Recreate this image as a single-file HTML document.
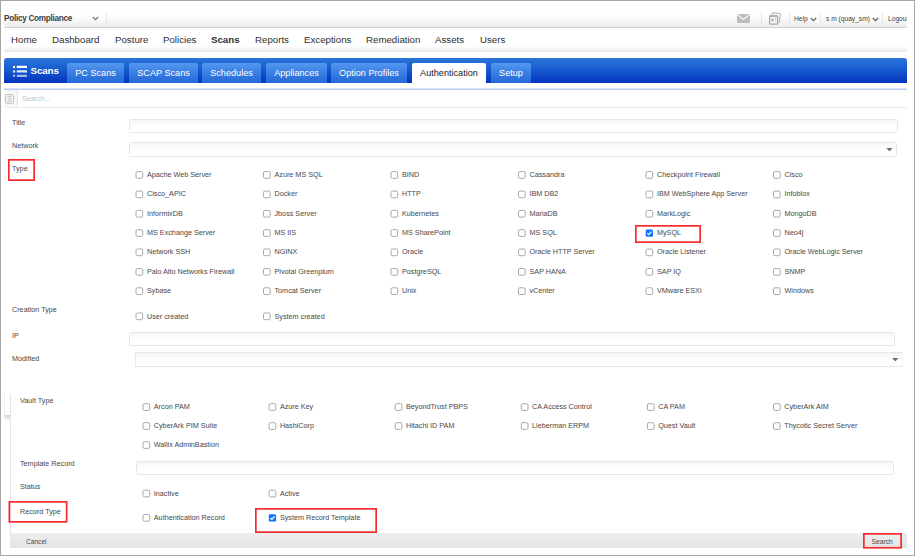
<!DOCTYPE html>
<html lang="en">
<head>
<meta charset="utf-8">
<title>Policy Compliance - Scans - Authentication</title>
<style>
*{box-sizing:border-box;margin:0;padding:0}
html,body{width:915px;height:556px;overflow:hidden;background:#fff}
body{font-family:"Liberation Sans",sans-serif;color:#333;position:relative}
.a{position:absolute;white-space:nowrap}
.frame{left:0;top:0;width:915px;height:556px;border:1px solid #a6a6a6}
.topbar{left:4px;top:8px;width:903px;height:20px;background:linear-gradient(#fff 0%,#fdfdfd 45%,#ededed 100%);border-bottom:1px solid #cfd3d6}
.nav{left:4px;top:28px;width:903px;height:24px;background:linear-gradient(#fff 0%,#fff 76%,#e9e9e9 100%)}
.bluebar{left:4px;top:58px;width:903px;height:25px;border-radius:3px 3px 0 0;background:linear-gradient(#2a74d8 0%,#1a5fd0 40%,#0433c0 100%)}
.tab{top:63px;height:20px;border-radius:2px 2px 0 0;background:linear-gradient(#5598f0 0%,#3a80e4 45%,#2468d8 100%);color:#fff;font-size:9.15px;line-height:20px;text-align:center}
.tab.on{background:#fff;color:#222}
.lbl{font-size:7.22px;line-height:10px;color:#484848}
.inp{height:14px;border:1px solid #e7e7e7;border-radius:1.5px;background:linear-gradient(#f6f6f6,#fff 60%)}
.navt{top:33px;font-size:9.7px;line-height:14px;color:#2e2e2e}
.tt{font-size:6.65px;line-height:10px;color:#444;top:14px}
</style>
</head>
<body>
<div class="a frame"></div>
<div class="a topbar"></div>
<div class="a nav"></div>
<div class="a" style="left:4px;top:13px;font-size:8.2px;letter-spacing:-0.28px;font-weight:bold;line-height:12px;color:#3d3d3d">Policy Compliance</div>
<svg class="a" style="left:92px;top:16px" width="7" height="5" viewBox="0 0 7 5"><path d="M0.8 1 L3.5 3.7 L6.2 1" fill="none" stroke="#777" stroke-width="1.3"/></svg>
<div class="a" style="left:106px;top:13px;width:1px;height:11px;background:#e6e6e6"></div>
<svg class="a" style="left:736.5px;top:14px" width="13" height="9" viewBox="0 0 13 9"><rect x="0" y="0" width="13" height="9" rx="0.8" fill="#bdbdbd"/><path d="M0.3 0.6 L6.5 5.2 L12.7 0.6" fill="none" stroke="#fff" stroke-width="1.1"/></svg>
<div class="a" style="left:761px;top:13px;width:1px;height:11px;background:#e6e6e6"></div>
<svg class="a" style="left:768px;top:12px" width="14" height="14" viewBox="0 0 14 14"><rect x="3.6" y="1.2" width="8.4" height="8.8" rx="0.8" fill="#f7f7f7" stroke="#b4b4b4" stroke-width="1" transform="rotate(9 7.8 5.6)"/><rect x="1.6" y="3.8" width="8" height="8.4" rx="0.8" fill="#f3f3f3" stroke="#a8a8a8" stroke-width="1.2"/><rect x="1.6" y="3.6" width="8" height="1.2" fill="#ababab"/><circle cx="4.5" cy="8.1" r="1.25" fill="#a4a4a4"/><rect x="7" y="6" width="1.2" height="1.1" fill="#b4b4b4"/><rect x="7" y="8.4" width="1.2" height="1.1" fill="#c4c4c4"/></svg>
<div class="a" style="left:789px;top:13px;width:1px;height:11px;background:#e6e6e6"></div>
<div class="a tt" style="left:794px">Help</div>
<svg class="a" style="left:809.5px;top:17px" width="7" height="5" viewBox="0 0 7 5"><path d="M0.8 1 L3.5 3.7 L6.2 1" fill="none" stroke="#666" stroke-width="1.3"/></svg>
<div class="a" style="left:820px;top:13px;width:1px;height:11px;background:#e6e6e6"></div>
<div class="a tt" style="left:826px">s m (quay_sm)</div>
<svg class="a" style="left:871.5px;top:17px" width="7" height="5" viewBox="0 0 7 5"><path d="M0.8 1 L3.5 3.7 L6.2 1" fill="none" stroke="#666" stroke-width="1.3"/></svg>
<div class="a" style="left:882px;top:13px;width:1px;height:11px;background:#e6e6e6"></div>
<div class="a tt" style="left:888px;width:19px;overflow:hidden">Logout</div>
<div class="a navt" style="left:11px">Home</div>
<div class="a navt" style="left:52px">Dashboard</div>
<div class="a navt" style="left:115px">Posture</div>
<div class="a navt" style="left:163px">Policies</div>
<div class="a navt" style="left:211px;font-weight:bold">Scans</div>
<div class="a navt" style="left:255px">Reports</div>
<div class="a navt" style="left:304px">Exceptions</div>
<div class="a navt" style="left:366px">Remediation</div>
<div class="a navt" style="left:435px">Assets</div>
<div class="a navt" style="left:480px">Users</div>
<div class="a bluebar"></div>
<svg class="a" style="left:12px;top:65px" width="16" height="13" viewBox="0 0 16 13"><g fill="#fff"><circle cx="2.05" cy="1.95" r="1.2"/><rect x="4.8" y="0.85" width="10.2" height="2.2" rx="0.3"/><g opacity="0.86"><circle cx="2.05" cy="6.45" r="1.2"/><rect x="4.8" y="5.35" width="10.2" height="2.2" rx="0.3"/></g><g opacity="0.62"><circle cx="2.05" cy="10.8" r="1.2"/><rect x="4.8" y="9.7" width="10.2" height="2.2" rx="0.3"/></g></g></svg>
<div class="a" style="left:30.6px;top:64px;font-size:9.8px;letter-spacing:-0.15px;font-weight:bold;color:#fff;line-height:14px">Scans</div>
<div class="a tab" style="left:67px;width:57px">PC Scans</div>
<div class="a tab" style="left:129px;width:69px">SCAP Scans</div>
<div class="a tab" style="left:202px;width:59px">Schedules</div>
<div class="a tab" style="left:266px;width:61px">Appliances</div>
<div class="a tab" style="left:331px;width:76px">Option Profiles</div>
<div class="a tab on" style="left:412px;width:74px">Authentication</div>
<div class="a tab" style="left:491px;width:40px">Setup</div>
<div class="a" style="left:4px;top:88px;width:903px;height:20px;border-bottom:1px solid #ececec;background:linear-gradient(#dbe6f9 0,#dbe6f9 1px,#b7cdf3 1px,#b7cdf3 2px,#fff 2px)"></div>
<div class="a" style="left:4px;top:90px;width:14px;height:17px;background:#f7f7f7;border-right:1px solid #e6e6e6"></div>
<svg class="a" style="left:5px;top:94px" width="9" height="10" viewBox="0 0 9 10"><rect x="0.5" y="0.5" width="8" height="9" rx="1.3" fill="#f0f0f0" stroke="#c6c6c6"/><path d="M2.6 2.8h3.8M2.6 5h3.8M2.6 7.2h3.8" stroke="#c4c4c4" stroke-width="1"/></svg>
<div class="a" style="left:22px;top:94px;font-size:7.2px;line-height:10px;color:#c4c4c4">Search...</div>
<div class="a lbl" style="left:12px;top:118px">Title</div>
<div class="a inp" style="left:129px;top:119px;width:769px"></div>
<div class="a lbl" style="left:12px;top:141px">Network</div>
<div class="a inp" style="left:129px;top:142px;width:768px;height:15px"></div>
<svg class="a" style="left:886px;top:147px" width="8" height="6" viewBox="0 0 8 6"><path d="M0.4 0.9 H6.6 L3.5 4.5 Z" fill="#6e6e6e"/></svg>
<div class="a lbl" style="left:12px;top:164px">Type</div>
<svg class="a" style="left:0;top:0;pointer-events:none" width="915" height="556" viewBox="0 0 915 556"><rect x="8.85" y="159.85" width="25.3" height="20.3" fill="none" stroke="#fb2a2e" stroke-width="1.7"/></svg>
<svg class="a" style="left:135px;top:171px" width="10" height="10" viewBox="0 0 10 10"><rect x="1.0" y="0.6" width="6.7" height="6.7" rx="1.4" fill="#fff" stroke="#a8a8a8" stroke-width="1"/></svg>
<div class="a lbl" style="left:147.0px;top:170px">Apache Web Server</div>
<svg class="a" style="left:263px;top:171px" width="10" height="10" viewBox="0 0 10 10"><rect x="0.5" y="0.6" width="6.7" height="6.7" rx="1.4" fill="#fff" stroke="#a8a8a8" stroke-width="1"/></svg>
<div class="a lbl" style="left:274.5px;top:170px">Azure MS SQL</div>
<svg class="a" style="left:390px;top:171px" width="10" height="10" viewBox="0 0 10 10"><rect x="1.0" y="0.6" width="6.7" height="6.7" rx="1.4" fill="#fff" stroke="#a8a8a8" stroke-width="1"/></svg>
<div class="a lbl" style="left:402.0px;top:170px">BIND</div>
<svg class="a" style="left:518px;top:171px" width="10" height="10" viewBox="0 0 10 10"><rect x="0.5" y="0.6" width="6.7" height="6.7" rx="1.4" fill="#fff" stroke="#a8a8a8" stroke-width="1"/></svg>
<div class="a lbl" style="left:529.5px;top:170px">Cassandra</div>
<svg class="a" style="left:645px;top:171px" width="10" height="10" viewBox="0 0 10 10"><rect x="1.0" y="0.6" width="6.7" height="6.7" rx="1.4" fill="#fff" stroke="#a8a8a8" stroke-width="1"/></svg>
<div class="a lbl" style="left:657.0px;top:170px">Checkpoint Firewall</div>
<svg class="a" style="left:773px;top:171px" width="10" height="10" viewBox="0 0 10 10"><rect x="0.5" y="0.6" width="6.7" height="6.7" rx="1.4" fill="#fff" stroke="#a8a8a8" stroke-width="1"/></svg>
<div class="a lbl" style="left:784.5px;top:170px">Cisco</div>
<svg class="a" style="left:135px;top:190px" width="10" height="10" viewBox="0 0 10 10"><rect x="1.0" y="1.1" width="6.7" height="6.7" rx="1.4" fill="#fff" stroke="#a8a8a8" stroke-width="1"/></svg>
<div class="a lbl" style="left:147.0px;top:189px">Cisco_APIC</div>
<svg class="a" style="left:263px;top:190px" width="10" height="10" viewBox="0 0 10 10"><rect x="0.5" y="1.1" width="6.7" height="6.7" rx="1.4" fill="#fff" stroke="#a8a8a8" stroke-width="1"/></svg>
<div class="a lbl" style="left:274.5px;top:189px">Docker</div>
<svg class="a" style="left:390px;top:190px" width="10" height="10" viewBox="0 0 10 10"><rect x="1.0" y="1.1" width="6.7" height="6.7" rx="1.4" fill="#fff" stroke="#a8a8a8" stroke-width="1"/></svg>
<div class="a lbl" style="left:402.0px;top:189px">HTTP</div>
<svg class="a" style="left:518px;top:190px" width="10" height="10" viewBox="0 0 10 10"><rect x="0.5" y="1.1" width="6.7" height="6.7" rx="1.4" fill="#fff" stroke="#a8a8a8" stroke-width="1"/></svg>
<div class="a lbl" style="left:529.5px;top:189px">IBM DB2</div>
<svg class="a" style="left:645px;top:190px" width="10" height="10" viewBox="0 0 10 10"><rect x="1.0" y="1.1" width="6.7" height="6.7" rx="1.4" fill="#fff" stroke="#a8a8a8" stroke-width="1"/></svg>
<div class="a lbl" style="left:657.0px;top:189px">IBM WebSphere App Server</div>
<svg class="a" style="left:773px;top:190px" width="10" height="10" viewBox="0 0 10 10"><rect x="0.5" y="1.1" width="6.7" height="6.7" rx="1.4" fill="#fff" stroke="#a8a8a8" stroke-width="1"/></svg>
<div class="a lbl" style="left:784.5px;top:189px">Infoblox</div>
<svg class="a" style="left:135px;top:209px" width="10" height="10" viewBox="0 0 10 10"><rect x="1.0" y="1.4" width="6.7" height="6.7" rx="1.4" fill="#fff" stroke="#a8a8a8" stroke-width="1"/></svg>
<div class="a lbl" style="left:147.0px;top:209px">InformixDB</div>
<svg class="a" style="left:263px;top:209px" width="10" height="10" viewBox="0 0 10 10"><rect x="0.5" y="1.4" width="6.7" height="6.7" rx="1.4" fill="#fff" stroke="#a8a8a8" stroke-width="1"/></svg>
<div class="a lbl" style="left:274.5px;top:209px">Jboss Server</div>
<svg class="a" style="left:390px;top:209px" width="10" height="10" viewBox="0 0 10 10"><rect x="1.0" y="1.4" width="6.7" height="6.7" rx="1.4" fill="#fff" stroke="#a8a8a8" stroke-width="1"/></svg>
<div class="a lbl" style="left:402.0px;top:209px">Kubernetes</div>
<svg class="a" style="left:518px;top:209px" width="10" height="10" viewBox="0 0 10 10"><rect x="0.5" y="1.4" width="6.7" height="6.7" rx="1.4" fill="#fff" stroke="#a8a8a8" stroke-width="1"/></svg>
<div class="a lbl" style="left:529.5px;top:209px">MariaDB</div>
<svg class="a" style="left:645px;top:209px" width="10" height="10" viewBox="0 0 10 10"><rect x="1.0" y="1.4" width="6.7" height="6.7" rx="1.4" fill="#fff" stroke="#a8a8a8" stroke-width="1"/></svg>
<div class="a lbl" style="left:657.0px;top:209px">MarkLogic</div>
<svg class="a" style="left:773px;top:209px" width="10" height="10" viewBox="0 0 10 10"><rect x="0.5" y="1.4" width="6.7" height="6.7" rx="1.4" fill="#fff" stroke="#a8a8a8" stroke-width="1"/></svg>
<div class="a lbl" style="left:784.5px;top:209px">MongoDB</div>
<svg class="a" style="left:135px;top:229px" width="10" height="10" viewBox="0 0 10 10"><rect x="1.0" y="0.7" width="6.7" height="6.7" rx="1.4" fill="#fff" stroke="#a8a8a8" stroke-width="1"/></svg>
<div class="a lbl" style="left:147.0px;top:228px">MS Exchange Server</div>
<svg class="a" style="left:263px;top:229px" width="10" height="10" viewBox="0 0 10 10"><rect x="0.5" y="0.7" width="6.7" height="6.7" rx="1.4" fill="#fff" stroke="#a8a8a8" stroke-width="1"/></svg>
<div class="a lbl" style="left:274.5px;top:228px">MS IIS</div>
<svg class="a" style="left:390px;top:229px" width="10" height="10" viewBox="0 0 10 10"><rect x="1.0" y="0.7" width="6.7" height="6.7" rx="1.4" fill="#fff" stroke="#a8a8a8" stroke-width="1"/></svg>
<div class="a lbl" style="left:402.0px;top:228px">MS SharePoint</div>
<svg class="a" style="left:518px;top:229px" width="10" height="10" viewBox="0 0 10 10"><rect x="0.5" y="0.7" width="6.7" height="6.7" rx="1.4" fill="#fff" stroke="#a8a8a8" stroke-width="1"/></svg>
<div class="a lbl" style="left:529.5px;top:228px">MS SQL</div>
<svg class="a" style="left:645px;top:229px" width="10" height="10" viewBox="0 0 10 10"><rect x="0.7" y="0.4" width="7.3" height="7.3" rx="1.3" fill="#0f75ff"/><path d="M2.3 4.2 L3.8 5.7 L6.5 2.6" fill="none" stroke="#fff" stroke-width="1.15"/></svg>
<div class="a lbl" style="left:657.0px;top:228px">MySQL</div>
<svg class="a" style="left:773px;top:229px" width="10" height="10" viewBox="0 0 10 10"><rect x="0.5" y="0.7" width="6.7" height="6.7" rx="1.4" fill="#fff" stroke="#a8a8a8" stroke-width="1"/></svg>
<div class="a lbl" style="left:784.5px;top:228px">Neo4j</div>
<svg class="a" style="left:135px;top:248px" width="10" height="10" viewBox="0 0 10 10"><rect x="1.0" y="1.0" width="6.7" height="6.7" rx="1.4" fill="#fff" stroke="#a8a8a8" stroke-width="1"/></svg>
<div class="a lbl" style="left:147.0px;top:247px">Network SSH</div>
<svg class="a" style="left:263px;top:248px" width="10" height="10" viewBox="0 0 10 10"><rect x="0.5" y="1.0" width="6.7" height="6.7" rx="1.4" fill="#fff" stroke="#a8a8a8" stroke-width="1"/></svg>
<div class="a lbl" style="left:274.5px;top:247px">NGINX</div>
<svg class="a" style="left:390px;top:248px" width="10" height="10" viewBox="0 0 10 10"><rect x="1.0" y="1.0" width="6.7" height="6.7" rx="1.4" fill="#fff" stroke="#a8a8a8" stroke-width="1"/></svg>
<div class="a lbl" style="left:402.0px;top:247px">Oracle</div>
<svg class="a" style="left:518px;top:248px" width="10" height="10" viewBox="0 0 10 10"><rect x="0.5" y="1.0" width="6.7" height="6.7" rx="1.4" fill="#fff" stroke="#a8a8a8" stroke-width="1"/></svg>
<div class="a lbl" style="left:529.5px;top:247px">Oracle HTTP Server</div>
<svg class="a" style="left:645px;top:248px" width="10" height="10" viewBox="0 0 10 10"><rect x="1.0" y="1.0" width="6.7" height="6.7" rx="1.4" fill="#fff" stroke="#a8a8a8" stroke-width="1"/></svg>
<div class="a lbl" style="left:657.0px;top:247px">Oracle Listener</div>
<svg class="a" style="left:773px;top:248px" width="10" height="10" viewBox="0 0 10 10"><rect x="0.5" y="1.0" width="6.7" height="6.7" rx="1.4" fill="#fff" stroke="#a8a8a8" stroke-width="1"/></svg>
<div class="a lbl" style="left:784.5px;top:247px">Oracle WebLogic Server</div>
<svg class="a" style="left:135px;top:268px" width="10" height="10" viewBox="0 0 10 10"><rect x="1.0" y="0.5" width="6.7" height="6.7" rx="1.4" fill="#fff" stroke="#a8a8a8" stroke-width="1"/></svg>
<div class="a lbl" style="left:147.0px;top:267px">Palo Alto Networks Firewall</div>
<svg class="a" style="left:263px;top:268px" width="10" height="10" viewBox="0 0 10 10"><rect x="0.5" y="0.5" width="6.7" height="6.7" rx="1.4" fill="#fff" stroke="#a8a8a8" stroke-width="1"/></svg>
<div class="a lbl" style="left:274.5px;top:267px">Pivotal Greenplum</div>
<svg class="a" style="left:390px;top:268px" width="10" height="10" viewBox="0 0 10 10"><rect x="1.0" y="0.5" width="6.7" height="6.7" rx="1.4" fill="#fff" stroke="#a8a8a8" stroke-width="1"/></svg>
<div class="a lbl" style="left:402.0px;top:267px">PostgreSQL</div>
<svg class="a" style="left:518px;top:268px" width="10" height="10" viewBox="0 0 10 10"><rect x="0.5" y="0.5" width="6.7" height="6.7" rx="1.4" fill="#fff" stroke="#a8a8a8" stroke-width="1"/></svg>
<div class="a lbl" style="left:529.5px;top:267px">SAP HANA</div>
<svg class="a" style="left:645px;top:268px" width="10" height="10" viewBox="0 0 10 10"><rect x="1.0" y="0.5" width="6.7" height="6.7" rx="1.4" fill="#fff" stroke="#a8a8a8" stroke-width="1"/></svg>
<div class="a lbl" style="left:657.0px;top:267px">SAP IQ</div>
<svg class="a" style="left:773px;top:268px" width="10" height="10" viewBox="0 0 10 10"><rect x="0.5" y="0.5" width="6.7" height="6.7" rx="1.4" fill="#fff" stroke="#a8a8a8" stroke-width="1"/></svg>
<div class="a lbl" style="left:784.5px;top:267px">SNMP</div>
<svg class="a" style="left:135px;top:287px" width="10" height="10" viewBox="0 0 10 10"><rect x="1.0" y="0.8" width="6.7" height="6.7" rx="1.4" fill="#fff" stroke="#a8a8a8" stroke-width="1"/></svg>
<div class="a lbl" style="left:147.0px;top:286px">Sybase</div>
<svg class="a" style="left:263px;top:287px" width="10" height="10" viewBox="0 0 10 10"><rect x="0.5" y="0.8" width="6.7" height="6.7" rx="1.4" fill="#fff" stroke="#a8a8a8" stroke-width="1"/></svg>
<div class="a lbl" style="left:274.5px;top:286px">Tomcat Server</div>
<svg class="a" style="left:390px;top:287px" width="10" height="10" viewBox="0 0 10 10"><rect x="1.0" y="0.8" width="6.7" height="6.7" rx="1.4" fill="#fff" stroke="#a8a8a8" stroke-width="1"/></svg>
<div class="a lbl" style="left:402.0px;top:286px">Unix</div>
<svg class="a" style="left:518px;top:287px" width="10" height="10" viewBox="0 0 10 10"><rect x="0.5" y="0.8" width="6.7" height="6.7" rx="1.4" fill="#fff" stroke="#a8a8a8" stroke-width="1"/></svg>
<div class="a lbl" style="left:529.5px;top:286px">vCenter</div>
<svg class="a" style="left:645px;top:287px" width="10" height="10" viewBox="0 0 10 10"><rect x="1.0" y="0.8" width="6.7" height="6.7" rx="1.4" fill="#fff" stroke="#a8a8a8" stroke-width="1"/></svg>
<div class="a lbl" style="left:657.0px;top:286px">VMware ESXi</div>
<svg class="a" style="left:773px;top:287px" width="10" height="10" viewBox="0 0 10 10"><rect x="0.5" y="0.8" width="6.7" height="6.7" rx="1.4" fill="#fff" stroke="#a8a8a8" stroke-width="1"/></svg>
<div class="a lbl" style="left:784.5px;top:286px">Windows</div>
<svg class="a" style="left:0;top:0;pointer-events:none" width="915" height="556" viewBox="0 0 915 556"><rect x="635.85" y="225.85" width="64.3" height="16.3" fill="none" stroke="#fb2a2e" stroke-width="1.7"/></svg>
<div class="a lbl" style="left:12px;top:305px">Creation Type</div>
<svg class="a" style="left:135px;top:312px" width="10" height="10" viewBox="0 0 10 10"><rect x="1.0" y="1.0" width="6.7" height="6.7" rx="1.4" fill="#fff" stroke="#a8a8a8" stroke-width="1"/></svg>
<div class="a lbl" style="left:147.0px;top:311.5px">User created</div>
<svg class="a" style="left:263px;top:312px" width="10" height="10" viewBox="0 0 10 10"><rect x="0.5" y="1.0" width="6.7" height="6.7" rx="1.4" fill="#fff" stroke="#a8a8a8" stroke-width="1"/></svg>
<div class="a lbl" style="left:274.5px;top:311.5px">System created</div>
<div class="a lbl" style="left:12px;top:331px">IP</div>
<div class="a inp" style="left:129px;top:332px;width:766px;border-radius:3px"></div>
<div class="a lbl" style="left:12px;top:354px">Modified</div>
<div class="a inp" style="left:135px;top:352px;width:768px;height:15px;border-right-color:#f0f0f0"></div>
<svg class="a" style="left:892px;top:357px" width="8" height="6" viewBox="0 0 8 6"><path d="M0.2 0.9 H6.4 L3.3 4.5 Z" fill="#6e6e6e"/></svg>
<div class="a" style="left:4px;top:394px;width:6px;height:30px;overflow:hidden"><div class="a" style="left:0;top:-4px;width:12px;height:25px;background:#fff;border-left:1px solid #f0f0f0;border-radius:0 0 0 3px;box-shadow:0 3px 4px rgba(0,0,0,0.2)"></div></div>
<div class="a" style="left:10px;top:394px;width:1px;height:139px;background:#e4e4e4"></div>
<div class="a lbl" style="left:20px;top:396px">Vault Type</div>
<svg class="a" style="left:142px;top:403px" width="10" height="10" viewBox="0 0 10 10"><rect x="1.0" y="0.7" width="6.7" height="6.7" rx="1.4" fill="#fff" stroke="#a8a8a8" stroke-width="1"/></svg>
<div class="a lbl" style="left:153.8px;top:402px">Arcon PAM</div>
<svg class="a" style="left:268px;top:403px" width="10" height="10" viewBox="0 0 10 10"><rect x="1.1" y="0.7" width="6.7" height="6.7" rx="1.4" fill="#fff" stroke="#a8a8a8" stroke-width="1"/></svg>
<div class="a lbl" style="left:279.90000000000003px;top:402px">Azure Key</div>
<svg class="a" style="left:394px;top:403px" width="10" height="10" viewBox="0 0 10 10"><rect x="1.2" y="0.7" width="6.7" height="6.7" rx="1.4" fill="#fff" stroke="#a8a8a8" stroke-width="1"/></svg>
<div class="a lbl" style="left:406.0px;top:402px">BeyondTrust PBPS</div>
<svg class="a" style="left:520px;top:403px" width="10" height="10" viewBox="0 0 10 10"><rect x="1.3" y="0.7" width="6.7" height="6.7" rx="1.4" fill="#fff" stroke="#a8a8a8" stroke-width="1"/></svg>
<div class="a lbl" style="left:532.0999999999999px;top:402px">CA Access Control</div>
<svg class="a" style="left:646px;top:403px" width="10" height="10" viewBox="0 0 10 10"><rect x="1.4" y="0.7" width="6.7" height="6.7" rx="1.4" fill="#fff" stroke="#a8a8a8" stroke-width="1"/></svg>
<div class="a lbl" style="left:658.1999999999999px;top:402px">CA PAM</div>
<svg class="a" style="left:773px;top:403px" width="10" height="10" viewBox="0 0 10 10"><rect x="0.5" y="0.7" width="6.7" height="6.7" rx="1.4" fill="#fff" stroke="#a8a8a8" stroke-width="1"/></svg>
<div class="a lbl" style="left:784.3px;top:402px">CyberArk AIM</div>
<svg class="a" style="left:142px;top:422px" width="10" height="10" viewBox="0 0 10 10"><rect x="1.0" y="0.7" width="6.7" height="6.7" rx="1.4" fill="#fff" stroke="#a8a8a8" stroke-width="1"/></svg>
<div class="a lbl" style="left:153.8px;top:421px">CyberArk PIM Suite</div>
<svg class="a" style="left:268px;top:422px" width="10" height="10" viewBox="0 0 10 10"><rect x="1.1" y="0.7" width="6.7" height="6.7" rx="1.4" fill="#fff" stroke="#a8a8a8" stroke-width="1"/></svg>
<div class="a lbl" style="left:279.90000000000003px;top:421px">HashiCorp</div>
<svg class="a" style="left:394px;top:422px" width="10" height="10" viewBox="0 0 10 10"><rect x="1.2" y="0.7" width="6.7" height="6.7" rx="1.4" fill="#fff" stroke="#a8a8a8" stroke-width="1"/></svg>
<div class="a lbl" style="left:406.0px;top:421px">Hitachi ID PAM</div>
<svg class="a" style="left:520px;top:422px" width="10" height="10" viewBox="0 0 10 10"><rect x="1.3" y="0.7" width="6.7" height="6.7" rx="1.4" fill="#fff" stroke="#a8a8a8" stroke-width="1"/></svg>
<div class="a lbl" style="left:532.0999999999999px;top:421px">Lieberman ERPM</div>
<svg class="a" style="left:646px;top:422px" width="10" height="10" viewBox="0 0 10 10"><rect x="1.4" y="0.7" width="6.7" height="6.7" rx="1.4" fill="#fff" stroke="#a8a8a8" stroke-width="1"/></svg>
<div class="a lbl" style="left:658.1999999999999px;top:421px">Quest Vault</div>
<svg class="a" style="left:773px;top:422px" width="10" height="10" viewBox="0 0 10 10"><rect x="0.5" y="0.7" width="6.7" height="6.7" rx="1.4" fill="#fff" stroke="#a8a8a8" stroke-width="1"/></svg>
<div class="a lbl" style="left:784.3px;top:421px">Thycotic Secret Server</div>
<svg class="a" style="left:142px;top:441px" width="10" height="10" viewBox="0 0 10 10"><rect x="1.0" y="0.7" width="6.7" height="6.7" rx="1.4" fill="#fff" stroke="#a8a8a8" stroke-width="1"/></svg>
<div class="a lbl" style="left:153.8px;top:440px">Wallix AdminBastion</div>
<div class="a lbl" style="left:20px;top:459px">Template Record</div>
<div class="a inp" style="left:136px;top:461px;width:758px"></div>
<div class="a lbl" style="left:20px;top:482px">Status</div>
<svg class="a" style="left:142px;top:489px" width="10" height="10" viewBox="0 0 10 10"><rect x="1.0" y="1.2" width="6.7" height="6.7" rx="1.4" fill="#fff" stroke="#a8a8a8" stroke-width="1"/></svg>
<div class="a lbl" style="left:153.8px;top:489px">Inactive</div>
<svg class="a" style="left:268px;top:489px" width="10" height="10" viewBox="0 0 10 10"><rect x="1.1" y="1.2" width="6.7" height="6.7" rx="1.4" fill="#fff" stroke="#a8a8a8" stroke-width="1"/></svg>
<div class="a lbl" style="left:279.90000000000003px;top:489px">Active</div>
<div class="a lbl" style="left:20px;top:507px">Record Type</div>
<svg class="a" style="left:0;top:0;pointer-events:none" width="915" height="556" viewBox="0 0 915 556"><rect x="9.35" y="501.85" width="57.3" height="20.0" fill="none" stroke="#fb2a2e" stroke-width="1.7"/></svg>
<svg class="a" style="left:142px;top:514px" width="10" height="10" viewBox="0 0 10 10"><rect x="1.0" y="0.5" width="6.7" height="6.7" rx="1.4" fill="#fff" stroke="#a8a8a8" stroke-width="1"/></svg>
<div class="a lbl" style="left:153.8px;top:513px">Authentication Record</div>
<svg class="a" style="left:268px;top:514px" width="10" height="10" viewBox="0 0 10 10"><rect x="0.8" y="0.2" width="7.3" height="7.3" rx="1.3" fill="#0f75ff"/><path d="M2.4 4.0 L3.9 5.5 L6.6 2.4" fill="none" stroke="#fff" stroke-width="1.15"/></svg>
<div class="a lbl" style="left:279.90000000000003px;top:513px">System Record Template</div>
<svg class="a" style="left:0;top:0;pointer-events:none" width="915" height="556" viewBox="0 0 915 556"><rect x="255.85" y="508.85" width="120.3" height="23.3" fill="none" stroke="#fb2a2e" stroke-width="1.7"/></svg>
<div class="a" style="left:10px;top:533px;width:897px;height:15px;background:linear-gradient(#ededed,#e5e5e5)"></div>
<div class="a lbl" style="left:26px;top:537px;font-size:6.6px">Cancel</div>
<div class="a lbl" style="left:871.5px;top:537px;font-size:6.7px">Search</div>
<svg class="a" style="left:0;top:0;pointer-events:none" width="915" height="556" viewBox="0 0 915 556"><rect x="863.85" y="533.85" width="37.3" height="13.9" fill="none" stroke="#fb2a2e" stroke-width="1.7"/></svg>
</body>
</html>
